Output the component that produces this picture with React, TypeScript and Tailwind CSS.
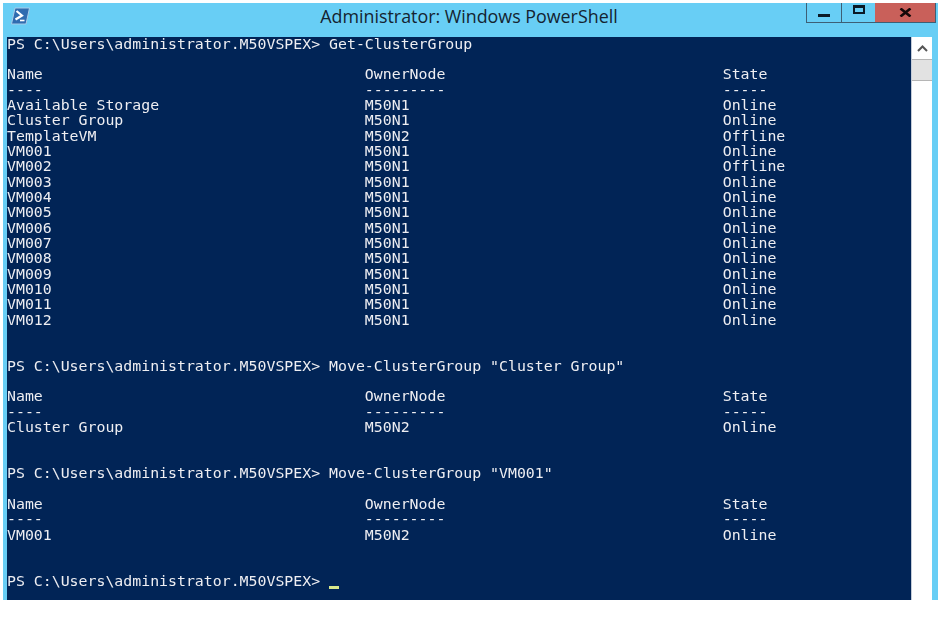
const row = (a: string, b: string, c: string) => a.padEnd(40) + b.padEnd(40) + c;
const prompt = "PS C:\\Users\\administrator.M50VSPEX> ";
const head = [row("Name", "OwnerNode", "State"), row("----", "---------", "-----")];
const groups: [string, string, string][] = [
  ["Available Storage", "M50N1", "Online"],
  ["Cluster Group", "M50N1", "Online"],
  ["TemplateVM", "M50N2", "Offline"],
  ["VM001", "M50N1", "Online"],
  ["VM002", "M50N1", "Offline"],
  ["VM003", "M50N1", "Online"],
  ["VM004", "M50N1", "Online"],
  ["VM005", "M50N1", "Online"],
  ["VM006", "M50N1", "Online"],
  ["VM007", "M50N1", "Online"],
  ["VM008", "M50N1", "Online"],
  ["VM009", "M50N1", "Online"],
  ["VM010", "M50N1", "Online"],
  ["VM011", "M50N1", "Online"],
  ["VM012", "M50N1", "Online"],
];
const lines = [
  prompt + "Get-ClusterGroup",
  "",
  ...head,
  ...groups.map((g) => row(...g)),
  "",
  "",
  prompt + 'Move-ClusterGroup "Cluster Group"',
  "",
  ...head,
  row("Cluster Group", "M50N2", "Online"),
  "",
  "",
  prompt + 'Move-ClusterGroup "VM001"',
  "",
  ...head,
  row("VM001", "M50N2", "Online"),
  "",
  "",
];

export default function App() {
  return (
    <div className="h-[638px] w-[938px] overflow-hidden bg-white pt-[3px] pl-[3px]">
      <div className="flex h-[597px] flex-col bg-[#68cef5]">
        <div className="relative flex h-[34px] shrink-0 items-start">
          <svg className="mt-[4px] ml-[8px] h-[18px] w-[19px]" viewBox="0 0 19 18">
            <path d="M4 1H18.5L15 17H0.5Z" fill="#2f6cb0" stroke="#a8cce8" strokeWidth="1" />
            <path d="M5.5 4L11 8.5L4.5 12.5" fill="none" stroke="#fff" strokeWidth="2.2" />
            <path d="M9 13.5H13.5" fill="none" stroke="#fff" strokeWidth="1.6" />
          </svg>
          <div className="mt-[5px] flex-1 pr-[30px] text-center font-['Open_Sans',sans-serif] text-[17.85px] leading-none text-[#142330]">
            Administrator: Windows PowerShell
          </div>
          <div className="absolute top-0 left-[803px] flex h-[20px] border-r border-b border-l border-[#3d5f75]">
            <div className="flex w-[35px] items-center justify-center border-r border-[#3d5f75]">
              <div className="mt-[5px] h-[3px] w-[12px] bg-[#0b1a26]" />
            </div>
            <div className="flex w-[33px] items-start justify-center pt-[2px]">
              <div className="h-[9px] w-[12px] border-2 border-t-[3px] border-[#0b1a26]" />
            </div>
            <div className="flex w-[60px] items-center justify-center bg-[#c9605a]">
              <svg className="h-[9px] w-[13px]" viewBox="0 0 13 9">
                <path d="M1.5 0.5L11.5 8.5M11.5 0.5L1.5 8.5" fill="none" stroke="#140808" strokeWidth="2.6" />
              </svg>
            </div>
          </div>
        </div>
        <div className="flex min-h-0 flex-1 pl-[4px] pr-[6px]">
          <div className="h-full flex-1 bg-[#012456]">
            <pre className="-mt-[0.5px] blur-[0.35px] font-['DejaVu_Sans_Mono',monospace] text-[14.86px] leading-[15.35px] text-[#eeeef2]">
              {lines.join("\n")}
              {"\n" + prompt}
              <span className="inline-block h-[3px] w-[10px] bg-[#d8e88c] align-[-3px]" />
            </pre>
          </div>
          <div className="flex w-[21px] shrink-0 flex-col border-l border-[#c4ccd8] bg-white">
            <div className="flex h-[22px] items-center justify-center">
              <svg className="h-[7px] w-[11px]" viewBox="0 0 11 7">
                <path d="M1 6L5.5 1.5L10 6" fill="none" stroke="#555" strokeWidth="2" />
              </svg>
            </div>
            <div className="h-[22px] border-y border-[#b5b5b5] bg-[#e2e2e2]" />
          </div>
        </div>
      </div>
    </div>
  );
}
